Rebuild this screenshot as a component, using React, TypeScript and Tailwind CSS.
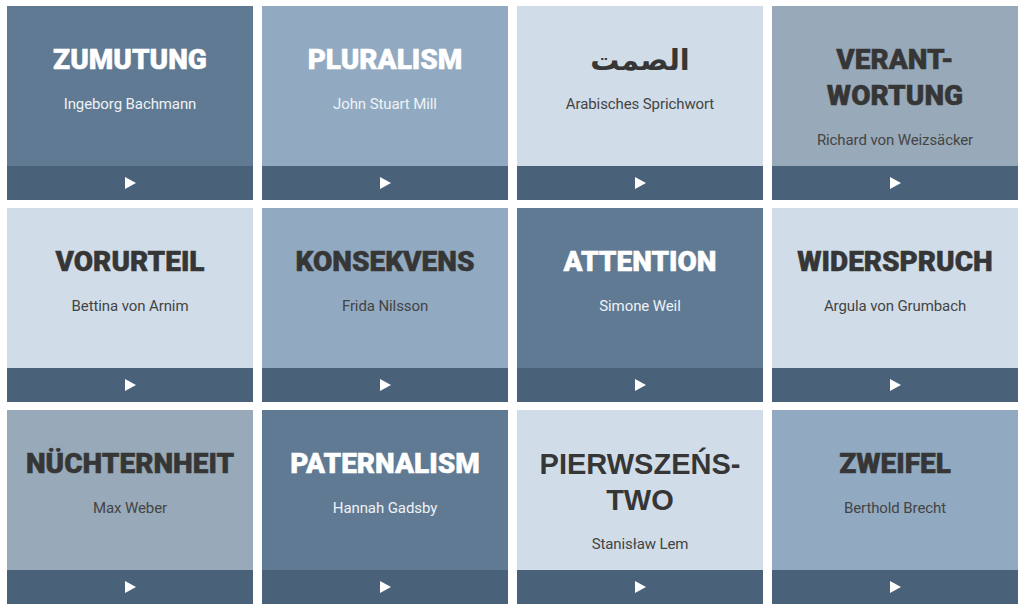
const tones = {
  dark: 'bg-[#5f7a92]',
  mid: 'bg-[#91aac1]',
  gray: 'bg-[#98aab9]',
  light: 'bg-[#d0dde8]',
};

type Card = {
  title: string[];
  author: string;
  tone: keyof typeof tones;
  light?: boolean;
  font?: 'arabic' | 'arial';
};

const cards: Card[] = [
  { title: ['ZUMUTUNG'], author: 'Ingeborg Bachmann', tone: 'dark', light: true },
  { title: ['PLURALISM'], author: 'John Stuart Mill', tone: 'mid', light: true },
  { title: ['الصمت'], author: 'Arabisches Sprichwort', tone: 'light', font: 'arabic' },
  { title: ['VERANT-', 'WORTUNG'], author: 'Richard von Weizsäcker', tone: 'gray' },
  { title: ['VORURTEIL'], author: 'Bettina von Arnim', tone: 'light' },
  { title: ['KONSEKVENS'], author: 'Frida Nilsson', tone: 'mid' },
  { title: ['ATTENTION'], author: 'Simone Weil', tone: 'dark', light: true },
  { title: ['WIDERSPRUCH'], author: 'Argula von Grumbach', tone: 'light' },
  { title: ['NÜCHTERNHEIT'], author: 'Max Weber', tone: 'gray' },
  { title: ['PATERNALISM'], author: 'Hannah Gadsby', tone: 'dark', light: true },
  { title: ['PIERWSZEŃS-', 'TWO'], author: 'Stanisław Lem', tone: 'light', font: 'arial' },
  { title: ['ZWEIFEL'], author: 'Berthold Brecht', tone: 'mid' },
];

function PlayIcon() {
  return (
    <svg width="11" height="12" viewBox="0 0 11 12" className="block">
      <path d="M0 0 L11 6 L0 12 Z" fill="#ffffff" />
    </svg>
  );
}

function QuoteCard({ card }: { card: Card }) {
  const titleFont =
    card.font === 'arabic'
      ? "text-[29px] font-['DejaVu_Sans',sans-serif] font-bold"
      : card.font === 'arial'
        ? "text-[29px] font-['Liberation_Sans',Arial,sans-serif] font-bold"
        : "text-[28px] font-['Roboto',sans-serif] font-black tracking-[0px] [-webkit-text-stroke:0.5px_currentColor]";

  return (
    <div className="flex flex-col h-[194px]">
      {/* Kopf mit Begriff und Autor */}
      <div className={`flex-1 flex flex-col items-center pt-[36px] ${tones[card.tone]}`}>
        <div
          className={`leading-[36px] text-center ${titleFont} ${
            card.light ? 'text-white' : 'text-[#363636]'
          }`}
        >
          {card.title.map((line) => (
            <div key={line}>{line}</div>
          ))}
        </div>
        <div
          className={`mt-[14px] text-[15px] leading-[24px] tracking-[-0.1px] font-['Roboto',sans-serif] ${
            card.light ? 'text-[#eef2f6]' : 'text-[#444444]'
          }`}
        >
          {card.author}
        </div>
      </div>

      {/* Abspielleiste */}
      <div className="h-[34px] bg-[#4a617a] flex items-center justify-center">
        <PlayIcon />
      </div>
    </div>
  );
}

export default function App() {
  return (
    <div className="w-[1024px] h-[610px] bg-white pl-[7px] pr-[6px] pt-[6px]">
      <div className="grid grid-cols-4 gap-x-[9px] gap-y-[8px]">
        {cards.map((card) => (
          <QuoteCard key={card.author} card={card} />
        ))}
      </div>
    </div>
  );
}
